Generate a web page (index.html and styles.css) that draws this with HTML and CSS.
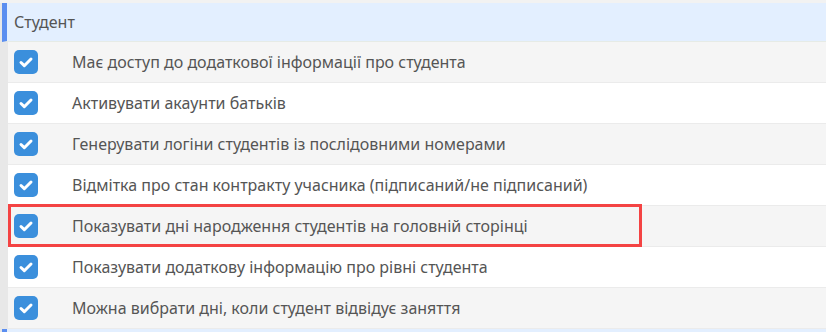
FILE: index.html
```html
<!DOCTYPE html>
<html lang="uk">
<head>
    <meta charset="UTF-8">
    <title>Студент</title>
    <link rel="stylesheet" href="styles.css">
</head>
<body>
    <div class="panel">
        <div class="group-title">Студент</div>
        <div class="option">
            <span class="check"><svg viewBox="0 0 24 24"><path d="M7 12.5l3.3 3.2L17 9"/></svg></span>
            <span class="label">Має доступ до додаткової інформації про студента</span>
        </div>
        <div class="option">
            <span class="check"><svg viewBox="0 0 24 24"><path d="M7 12.5l3.3 3.2L17 9"/></svg></span>
            <span class="label">Активувати акаунти батьків</span>
        </div>
        <div class="option">
            <span class="check"><svg viewBox="0 0 24 24"><path d="M7 12.5l3.3 3.2L17 9"/></svg></span>
            <span class="label">Генерувати логіни студентів із послідовними номерами</span>
        </div>
        <div class="option">
            <span class="check"><svg viewBox="0 0 24 24"><path d="M7 12.5l3.3 3.2L17 9"/></svg></span>
            <span class="label">Відмітка про стан контракту учасника (підписаний/не підписаний)</span>
        </div>
        <div class="option marked">
            <span class="check"><svg viewBox="0 0 24 24"><path d="M7 12.5l3.3 3.2L17 9"/></svg></span>
            <span class="label">Показувати дні народження студентів на головній сторінці</span>
            <span class="highlight"></span>
        </div>
        <div class="option">
            <span class="check"><svg viewBox="0 0 24 24"><path d="M7 12.5l3.3 3.2L17 9"/></svg></span>
            <span class="label">Показувати додаткову інформацію про рівні студента</span>
        </div>
        <div class="option">
            <span class="check"><svg viewBox="0 0 24 24"><path d="M7 12.5l3.3 3.2L17 9"/></svg></span>
            <span class="label">Можна вибрати дні, коли студент відвідує заняття</span>
        </div>
        <div class="group-title"></div>
    </div>
</body>
</html>
```

FILE: styles.css
```css
body {
    margin: 0;
    font-family: 'Noto Sans', 'Open Sans', sans-serif;
    background: #f2f2f2;
    overflow: hidden;
}
.panel {
    background: #e8e8e8;
    margin-top: 3px;
    display: flex;
    flex-direction: column;
}
.group-title {
    margin-left: 2px;
    height: 38px;
    background: #e3efff;
    border-left: 5px solid #5b8ef0;
    border-bottom: 1px solid #e6ebe6;
    display: flex;
    align-items: center;
    padding-left: 7px;
    font-size: 16px;
    color: #555;
}
.option {
    position: relative;
    margin-left: 8px;
    height: 40px;
    border-bottom: 1px solid #ebebeb;
    display: flex;
    align-items: center;
    padding-left: 6px;
    background: #f5f5f5;
}
.option:nth-child(odd) {
    background: #fff;
}
.check {
    width: 24px;
    height: 24px;
    border-radius: 5px;
    background: #3b8fdc;
    display: flex;
    flex-shrink: 0;
}
.check svg {
    width: 24px;
    height: 24px;
    fill: none;
    stroke: #fff;
    stroke-width: 3;
    stroke-linecap: round;
    stroke-linejoin: round;
}
.label {
    margin-left: 34px;
    font-size: 16px;
    color: #555;
}
.highlight {
    position: absolute;
    left: 0;
    top: -2px;
    width: 634px;
    height: 43px;
    box-sizing: border-box;
    border: 3px solid #f44343;
}
```
